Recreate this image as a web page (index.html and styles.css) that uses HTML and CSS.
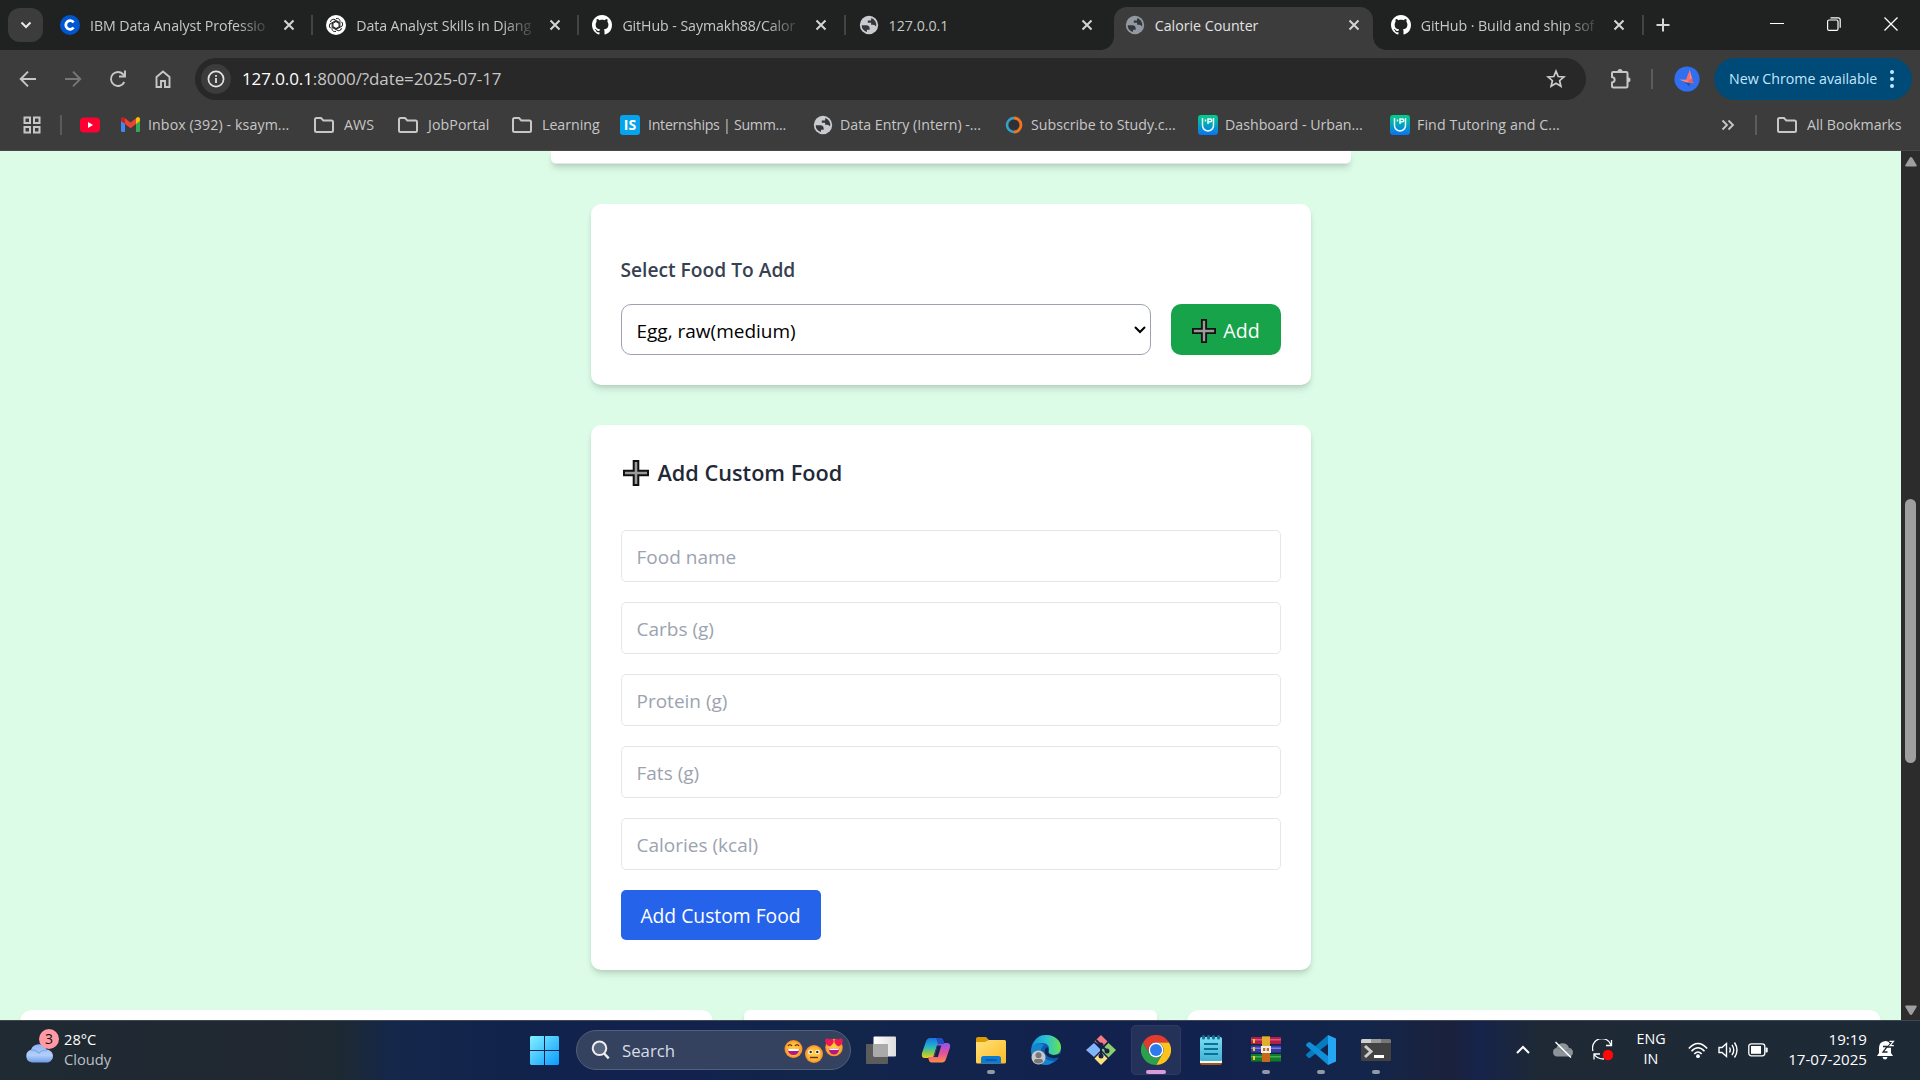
FILE: index.html
```html
<!DOCTYPE html>
<html lang="en">
<head>
<meta charset="utf-8">
<title>Calorie Counter</title>
<link rel="stylesheet" href="styles.css">
</head>
<body>
<svg class="sprite" aria-hidden="true">
  <symbol id="close" viewBox="0 0 12 12"><path d="M1.500 1.500l9 9M10.500 1.500l-9 9" fill="none" stroke="currentColor" stroke-width="2"/></symbol>
  <symbol id="folder" viewBox="0 0 22 18"><path d="M2 3.500Q2 2 3.500 2H8l2.300 2.400h8.200Q20 4.400 20 5.900V14.500Q20 16 18.500 16H3.500Q2 16 2 14.500Z" fill="none" stroke="currentColor" stroke-width="2"/></symbol>
  <symbol id="globe" viewBox="0 0 24 24"><circle cx="12" cy="12" r="10" fill="currentColor"/><path d="M4 12.200h5q3.500.3 3.700 3.200v1.800H9.800v2.400A8 8 0 0 1 4 12.200ZM14.500 4.400A8 8 0 0 1 19.800 13.500q-1.300-1.800-3.300-1.800h-2.200V9.600h-3.600V7.200h3.500Z" fill="#35373a"/></symbol>
  <symbol id="github" viewBox="0 0 16 16"><path fill="#fff" d="M8 0C3.580 0 0 3.580 0 8c0 3.540 2.290 6.530 5.470 7.590.4.070.55-.17.55-.38 0-.19-.01-.82-.01-1.490-2.010.37-2.530-.49-2.690-.94-.09-.23-.48-.94-.82-1.130-.28-.15-.68-.52-.01-.53.63-.01 1.080.58 1.230.82.72 1.210 1.870.87 2.330.66.07-.52.28-.87.51-1.070-1.780-.2-3.640-.89-3.640-3.950 0-.87.31-1.590.82-2.150-.08-.2-.36-1.020.08-2.120 0 0 .67-.21 2.200.82.64-.18 1.320-.27 2-.27s1.360.09 2 .27c1.530-1.040 2.200-.82 2.200-.82.44 1.100.16 1.920.08 2.120.51.56.82 1.270.82 2.150 0 3.070-1.870 3.750-3.650 3.950.29.25.54.73.54 1.480 0 1.070-.01 1.930-.01 2.200 0 .21.15.46.55.38A8.010 8.010 0 0 0 16 8c0-4.420-3.580-8-8-8z"/></symbol>
  <symbol id="plus" viewBox="0 0 26 26"><path d="M10.700 1h4.600v9.700H25v4.600h-9.700V25h-4.600v-9.700H1v-4.600h9.700Z" fill="#9b9b9b" stroke="#111" stroke-width="2"/></symbol>
  <linearGradient id="upg" x2="0" y2="1"><stop stop-color="#05cf86"/><stop offset="1" stop-color="#0873f4"/></linearGradient>
  <symbol id="upi" viewBox="0 0 20 20"><rect width="20" height="20" rx="3" fill="url(#upg)"/><path d="M4.500 3v7.500a5.500 5.500 0 0 0 11 0V3M10 9V4h2.300q1.400 0 1.400 1.400t-1.400 1.400H10M7.500 4.500v2" fill="none" stroke="#e7fcff" stroke-width="1.500"/></symbol>
</svg>

<header class="chrome">
  <div class="tabstrip">
    <button class="tab-search"><svg width="12" height="8" viewBox="0 0 12 8"><path d="M1.500 1.500L6 6l4.500-4.500" fill="none" stroke="#e8e8e8" stroke-width="2"/></svg></button>
    <div class="tab"><svg class="fav" viewBox="0 0 20 20"><circle cx="10" cy="10" r="10" fill="#0056d2"/><path d="M13.600 12.500A4.300 4.300 0 1 1 13.600 7.500" fill="none" stroke="#fff" stroke-width="2.800"/></svg><span class="title fade">IBM Data Analyst Professio</span><svg class="x"><use href="#close"/></svg></div>
    <div class="tab"><svg class="fav" viewBox="0 0 20 20"><circle cx="10" cy="10" r="10" fill="#fff"/><g fill="none" stroke="#222" stroke-width="1"><g id="petal"><path d="M10 3.600c2.600-.8 4.500 1.200 3.900 3.700v4L10 13.500"/></g><use href="#petal" transform="rotate(60 10 10)"/><use href="#petal" transform="rotate(120 10 10)"/><use href="#petal" transform="rotate(180 10 10)"/><use href="#petal" transform="rotate(240 10 10)"/><use href="#petal" transform="rotate(300 10 10)"/></g></svg><span class="title fade">Data Analyst Skills in Djang</span><svg class="x"><use href="#close"/></svg></div>
    <div class="tab"><svg class="fav"><use href="#github"/></svg><span class="title fade">GitHub - Saymakh88/Calor</span><svg class="x"><use href="#close"/></svg></div>
    <div class="tab nosep"><svg class="fav globe"><use href="#globe"/></svg><span class="title">127.0.0.1</span><svg class="x"><use href="#close"/></svg></div>
    <div class="tab active"><svg class="fav globe dim"><use href="#globe"/></svg><span class="title">Calorie Counter</span><svg class="x"><use href="#close"/></svg></div>
    <div class="tab"><svg class="fav"><use href="#github"/></svg><span class="title fade">GitHub · Build and ship sof</span><svg class="x"><use href="#close"/></svg></div>
    <button class="newtab"><svg width="14" height="14"><path d="M7 .5v13M.5 7h13" stroke="#d5d5d5" stroke-width="2"/></svg></button>
    <div class="window-buttons">
      <svg width="14" height="14"><path d="M0 6.500h14" stroke="#fff"/></svg>
      <svg width="14" height="14"><g fill="none" stroke="#fff" stroke-width="1.200"><rect x=".6" y="3" width="10.400" height="10.400" rx="1.500"/><path d="M3.500.8h7.700q2 0 2 2v8"/></g></svg>
      <svg width="14" height="14"><path d="M.5.5l13 13M13.500.5l-13 13" stroke="#fff" stroke-width="1.300"/></svg>
    </div>
  </div>

  <div class="toolbar">
    <nav class="nav">
      <svg viewBox="0 0 20 20"><path d="M18 10H3M10 2.700L2.700 10l7.300 7.300" /></svg>
      <svg class="off" viewBox="0 0 20 20"><path d="M2 10h15M10 2.700l7.300 7.300-7.300 7.300"/></svg>
      <svg viewBox="0 0 20 20"><path d="M16.300 13A7 7 0 1 1 15.500 5.700L17 7.200M17 1.500v6h-6"/></svg>
      <svg viewBox="0 0 20 20"><path d="M3.500 8L10 2.500 16.500 8v10H12v-6H8v6H3.500Z"/></svg>
    </nav>
    <div class="omnibox">
      <span class="info"><svg width="18" height="18"><circle cx="9" cy="9" r="7.600" fill="none" stroke="#e3e3e3" stroke-width="1.700"/><path d="M9 8v5M9 5v1.800" stroke="#e3e3e3" stroke-width="1.800"/></svg></span>
      <span class="url"><b>127.0.0.1</b>:8000/?date=2025-07-17</span>
      <svg class="star" width="20" height="20" viewBox="0 0 20 20"><path d="M10 2.200l2.200 5.300 5.700.5-4.300 3.700 1.300 5.600-4.900-3-4.900 3 1.300-5.600L2.100 8l5.700-.5Z" fill="none" stroke="#ccc" stroke-width="1.700"/></svg>
    </div>
    <svg class="puzzle" width="24" height="24" viewBox="0 0 24 24"><path d="M4 5h13.200q1.300 0 1.300 1.300v12.700q0 1.500-1.500 1.500H4.500Q3 20.500 3 19V15.500c3.500-.5 3.500-5 0-5.500V6Q3 5 4 5Z" fill="none" stroke="#c7c7c7" stroke-width="2"/><path d="M8.500 4.500a2.500 2.500 0 0 1 5 0ZM19 10.200a2.500 2.500 0 0 1 0 5Z" fill="#c7c7c7"/></svg>
    <i class="bar"></i>
    <svg class="avatar" width="26" height="26" viewBox="0 0 26 26"><circle cx="13" cy="13" r="12.600" fill="#2f6ff0"/><path d="M10 15.500l6-1-.5 6Z" fill="#1650b8"/><path d="M15.800 4l2.700 10-5.500-1Z" fill="#ff8b7d"/><path d="M5 13.500l8 .2 6.500 3.300-7-.5Z" fill="#ff8277"/><path d="M15.800 4l-3.800 9.500 4 3.500Z" fill="#f1716c"/><path d="M17.500 12l2.500 5.500-6-1.200Z" fill="#e85c5c"/></svg>
    <button class="update"><span>New Chrome available</span><svg width="4" height="20"><circle cx="2" cy="3" r="2"/><circle cx="2" cy="10" r="2"/><circle cx="2" cy="17" r="2"/></svg></button>
  </div>

  <div class="bookmarks">
    <svg width="18" height="18"><g fill="none" stroke="#c7c7c7" stroke-width="2"><path d="M1.500 1.500H7V7H1.500ZM11 1.500h5.500V7H11ZM1.500 11H7v5.500H1.500ZM11 11h5.500v5.500H11Z"/></g></svg>
    <i class="bar"></i>
    <div class="bm"><svg width="20" height="16"><rect y=".5" width="20" height="15" rx="4" fill="#ff0033"/><path d="M8 5l5 3-5 3Z" fill="#fff"/></svg></div>
    <div class="bm"><svg width="19" height="15" viewBox="0 0 19 15"><path d="M0 2v11.500Q0 15 1.300 15H4V5Z" fill="#4285f4"/><path d="M19 2v11.500q0 1.500-1.300 1.500H15V5Z" fill="#34a853"/><path d="M4 1.200L9.500 5.500 15 1.200V7L9.500 11.300 4 7Z" fill="#ea4335"/><path d="M0 2.200C0 .2 2-.5 3.500.7L4 1.200V7L0 4Z" fill="#c5221f"/><path d="M19 2.200C19 .2 17-.5 15.500.7l-.5.500V7l4-3Z" fill="#fbbc04"/></svg><span class="loose">Inbox (392) - ksaym...</span></div>
    <div class="bm"><svg class="folder"><use href="#folder"/></svg><span class="loose">AWS</span></div>
    <div class="bm"><svg class="folder"><use href="#folder"/></svg><span class="loose">JobPortal</span></div>
    <div class="bm"><svg class="folder"><use href="#folder"/></svg><span>Learning</span></div>
    <div class="bm"><b class="is">IS</b><span class="tight">Internships | Summ...</span></div>
    <div class="bm near"><svg class="fav globe"><use href="#globe"/></svg><span>Data Entry (Intern) -...</span></div>
    <div class="bm"><svg width="18" height="18"><circle cx="9" cy="9" r="5" fill="#2c3039"/><path d="M9 2a7 7 0 0 0 0 14" fill="none" stroke="#35a3c4" stroke-width="2.500"/><path d="M9 2a7 7 0 0 1 0 14" fill="none" stroke="#f47321" stroke-width="2.800"/></svg><span>Subscribe to Study.c...</span></div>
    <div class="bm near"><svg class="fav"><use href="#upi"/></svg><span>Dashboard - Urban...</span></div>
    <div class="bm near"><svg class="fav"><use href="#upi"/></svg><span class="loose">Find Tutoring and C...</span></div>
    <svg width="14" height="12"><path d="M1.500 1.500L6 6l-4.500 4.500M7.500 1.500L12 6l-4.500 4.500" fill="none" stroke="#c7c7c7" stroke-width="1.800"/></svg>
    <i class="bar"></i>
    <div class="bm"><svg class="folder"><use href="#folder"/></svg><span>All Bookmarks</span></div>
  </div>
</header>

<div class="viewport">
  <main class="page">
    <section class="card above"></section>

    <section class="card picker">
      <label class="label" for="food">Select Food To Add</label>
      <div class="row">
        <div class="select" id="food"><span>Egg, raw(medium)</span><svg width="12" height="8"><path d="M1 1l5 5 5-5" fill="none" stroke="#000" stroke-width="2"/></svg></div>
        <button class="add"><svg width="24" height="24"><use href="#plus"/></svg><span>Add</span></button>
      </div>
    </section>

    <section class="card custom">
      <h2><svg width="26" height="26"><use href="#plus"/></svg><span>Add Custom Food</span></h2>
      <form>
        <input type="text" placeholder="Food name">
        <input type="text" placeholder="Carbs (g)">
        <input type="text" placeholder="Protein (g)">
        <input type="text" placeholder="Fats (g)">
        <input type="text" placeholder="Calories (kcal)">
        <button class="submit" type="button">Add Custom Food</button>
      </form>
    </section>

    <div class="below"><section class="card"></section><section class="card mid"></section><section class="card"></section></div>
  </main>
  <div class="scrollbar">
    <svg width="12" height="10"><path d="M6 0q.8 0 1.400 1l4.200 7q.6 1.500-.8 1.500H1.200Q-.2 9.500.4 8l4.200-7Q5.200 0 6 0Z" fill="#9f9f9f"/></svg>
    <div class="track"><div class="thumb"></div></div>
    <svg width="12" height="10"><path d="M6 10q.8 0 1.400-1l4.200-7Q12.200.5 10.800.5H1.200Q-.2.5.4 2l4.200 7Q5.200 10 6 10Z" fill="#9f9f9f"/></svg>
  </div>
</div>

<footer class="taskbar">
  <div class="weather">
    <div class="cloud"><svg width="30" height="20" viewBox="0 0 30 20"><linearGradient id="cl" x2="0" y2="1"><stop stop-color="#8fb4f5"/><stop offset=".6" stop-color="#b3cff9"/><stop offset="1" stop-color="#6d9ae9"/></linearGradient><path d="M7 19.500a6.500 6.500 0 0 1-1-12.700A8.300 8.300 0 0 1 21.500 6.500 6.600 6.600 0 0 1 23 19.500Z" fill="url(#cl)"/><path d="M6 7q4-.5 8 3 3-3 8-3" fill="none" stroke="#7ba5ee" stroke-width="1.200"/></svg><span class="badge">3</span></div>
    <div class="forecast"><span>28°C</span><span class="muted">Cloudy</span></div>
  </div>

  <div class="center">
    <svg class="start" width="29" height="29"><linearGradient id="wg" gradientUnits="userSpaceOnUse" x1="0" y1="0" x2="29" y2="29"><stop stop-color="#84f0ff"/><stop offset="1" stop-color="#089bff"/></linearGradient><path d="M1 0h13v14H0V1ZM15 0h13l1 1v13H15ZM0 15h14v14H1l-1-1ZM15 15h14v13l-1 1H15Z" fill="url(#wg)"/></svg>
    <div class="search">
      <svg width="20" height="20"><circle cx="8.500" cy="8.300" r="6.800" fill="#586580" stroke="#eee" stroke-width="2"/><path d="M13.200 13.500l4.500 4.800" stroke="#eee" stroke-width="2.500"/></svg>
      <span>Search</span>
      <svg class="emoji" width="60" height="26" viewBox="0 0 60 26">
        <radialGradient id="eg"><stop stop-color="#ffcf3f"/><stop offset=".7" stop-color="#ffb638"/><stop offset="1" stop-color="#f4882a"/></radialGradient>
        <g fill="url(#eg)"><circle cx="9.500" cy="11" r="9"/><circle cx="30" cy="16" r="9"/><circle cx="50" cy="9.500" r="8.800"/></g>
        <path d="M3.500 11h12q-1 6-6 6t-6-6Z" fill="#b51683"/><path d="M4 11h11l-.5 2h-10Z" fill="#fff"/><path d="M4 8q2-2.500 4 0M11 8q2-2.500 4 0" fill="none" stroke="#4c2712" stroke-width="1.200"/>
        <circle cx="26.500" cy="14" r="2.300" fill="#fff"/><circle cx="33.500" cy="14" r="2.300" fill="#fff"/><circle cx="26.700" cy="14" r="1.200" fill="#412312"/><circle cx="33.300" cy="14" r="1.200" fill="#412312"/><path d="M26 19.500h8" stroke="#633415" stroke-width="1.400"/>
        <path d="M44.500 10.500h11q-1 6-5.500 6t-5.500-6Z" fill="#b51683"/><path d="M45 10.500h10l-.5 1.500h-9Z" fill="#fff"/><path id="hrt" d="M45.500 8.500C39 5 41 0 43.500.2q1.700.2 2.200 2Q47-.1 48.800 1.200C51 3.500 48.500 7.500 45.500 8.500Z" fill="#ee1853"/><use href="#hrt" transform="matrix(-1 0 0 1 100 0)"/>
      </svg>
    </div>
    <div class="app"><svg viewBox="0 0 30 30"><linearGradient id="tv"><stop stop-color="#fff"/><stop offset="1" stop-color="#ddd"/></linearGradient><rect y="9" width="22" height="20" rx="1" fill="#5c5c5c"/><rect x="7.500" y="1.500" width="22.500" height="20" rx="1" fill="url(#tv)"/><path d="M7.500 9H22v12.500H7.500Z" fill="#aaa"/></svg></div>
    <div class="app"><svg viewBox="0 0 30 30"><defs><linearGradient id="c1" x2="0" y2="1"><stop stop-color="#1474e8"/><stop offset=".45" stop-color="#27b6c6"/><stop offset=".7" stop-color="#79c65b"/><stop offset="1" stop-color="#f7c915"/></linearGradient><linearGradient id="c2" x2="0" y2="1"><stop stop-color="#8b55ef"/><stop offset=".5" stop-color="#e24f9e"/><stop offset="1" stop-color="#ff8c46"/></linearGradient></defs><path d="M19.500 3q2 0 2.700 2.500l1 3.500h-5q-2 0-2.700 2.500l-2.800 9Q12 23 9.500 23H3.500Q0 23 1 18L5 6.500Q6 3 9 3Z" fill="url(#c1)"/><path d="M10.500 27.500q-2 0-2.700-2.500L7 22h4q2 0 2.700-2.500l2.800-9Q17.200 8 19.500 8h6.500q4 0 3 4.500L25 24q-1 3.500-4 3.500Z" fill="url(#c2)"/><path d="M15 3h4.500q2 0 2.700 2.500l1 3.500H17Z" fill="#244dc7"/><path d="M16.500 10.500h3.800l-3.400 11.500h-4q.6-.8 1-2.200Z" fill="#13224c"/></svg></div>
    <div class="app run"><svg viewBox="0 0 30 30"><linearGradient id="fe" x2="1" y2="1"><stop stop-color="#ffe17b"/><stop offset="1" stop-color="#ffba22"/></linearGradient><path d="M0 4Q0 2 2 2h8l3 3v5H0Z" fill="#dd9a05"/><path d="M0 7h9l4-2h15.500Q30 5 30 6.500V27q0 1.500-1.500 1.500h-27Q0 28.500 0 27Z" fill="url(#fe)"/><path d="M5 28.500v-5q0-2.500 2.500-2.500h15q2.500 0 2.500 2.500v5Z" fill="#0c7bd3"/><path d="M9.500 25h11" stroke="#0757a5" stroke-width="1.600"/></svg></div>
    <div class="app"><svg viewBox="0 0 30 30"><defs><linearGradient id="e1"><stop stop-color="#1397d5"/><stop offset=".5" stop-color="#2bc2d3"/><stop offset="1" stop-color="#69e34b"/></linearGradient></defs><path d="M0 15a15 15 0 1 1 23 12.500Q10 30 6 24Z" fill="#0b5db3"/><path d="M1 11C4 3 9 0 15 0c9 0 15 6 15 12 0 5-3 8-7.500 8-4 0-6.500-1.500-5-4 1.800-5-1.500-8-6.500-8C6 8 2 10 1 13Z" fill="url(#e1)"/><path d="M0 16C0 9 8 6 13 10q-4 3-2.500 8Q13 26 23 26q-3 4-8 4C7 30 0 24 0 16Z" fill="#1684cf"/><path d="M16 12q-3 2-2 6 3 7 14 4.500l2-1.500v-3q-3 2.500-7.500 2-5.500-.5-5-4 1-2-1.500-4Z" fill="#10254c"/><circle cx="7.500" cy="22.500" r="7" fill="#c9c9c9"/><circle cx="7.500" cy="20.300" r="3" fill="#777"/><path d="M3 27q0-3 2-3h5q2 0 2 3-4.500 3-9 0Z" fill="#777"/></svg></div>
    <div class="app"><svg viewBox="0 0 30 30"><path d="M15 0l6.500 6.500-5 5L8.500 6.500Z" fill="#f47b80"/><path d="M8 8l6 6v2l-6 6-8-7Z" fill="#80b5fa"/><path d="M22.500 8L30 15l-7.500 7.500L15.500 15Z" fill="#8dcf6a"/><path d="M15 17l6.500 6.500L15 30l-6.500-6.500Z" fill="#fbe27a"/><path d="M10 5l5 5v12M15 10l6.500 6.500" fill="none" stroke="#13214c" stroke-width="2"/><g fill="#13214c"><circle cx="15" cy="10" r="2.500"/><circle cx="15" cy="21" r="2.500"/><circle cx="21" cy="16" r="2.500"/></g></svg></div>
    <div class="app run current"><svg viewBox="0 0 30 30"><path d="M2 7.500A15 15 0 0 1 28 7.500H15A7.500 7.500 0 0 0 8.500 18.800Z" fill="#e33b2e"/><path d="M28 7.500A15 15 0 0 1 15 30L21.500 18.800A7.500 7.500 0 0 0 15 7.500Z" fill="#fcc31e"/><path d="M2 7.500L8.500 18.800a7.500 7.500 0 0 0 13 0L15 30A15 15 0 0 1 2 7.500Z" fill="#2da04d"/><circle cx="15" cy="15" r="7.400" fill="#fff"/><circle cx="15" cy="15" r="6" fill="#2b7bef"/></svg></div>
    <div class="app"><svg viewBox="0 0 30 30"><linearGradient id="np" x2="0" y2="1"><stop stop-color="#7bdcf2"/><stop offset="1" stop-color="#42b2d3"/></linearGradient><path d="M4 26h22v2q0 2-2 2H6q-2 0-2-2Z" fill="#a4561a"/><path d="M4 24h22v4H4Z" fill="#f4f4f4"/><rect x="4" y="2" width="22" height="24" rx="1.500" fill="url(#np)"/><path d="M8 9h14M8 14h14M8 19h14" stroke="#087299" stroke-width="2"/><path d="M7.500 1.500v1.500M12.500 1.500v1.500M17.500 1.500v1.500M22.500 1.500v1.500" stroke="#127591" stroke-width="3" stroke-linecap="round"/></svg></div>
    <div class="app run"><svg viewBox="0 0 30 30"><path d="M0 2h30v7H0Z" fill="#b31f48"/><path d="M0 4h30v1.500H0Z" fill="#e35578"/><path d="M0 10.500h30v7H0Z" fill="#3b3ba4"/><path d="M0 12.500h30V14H0Z" fill="#7b7be4"/><path d="M0 19h30v7.500H0Z" fill="#127a2b"/><path d="M0 21h30v1.500H0Z" fill="#45ad4c"/><path d="M3 4v4M3 12v4M3 21v4" stroke="#f0cd20" stroke-width="2"/><path d="M11 1.500h8V27h-8Z" fill="#c66817"/><path d="M11 1.500h8v10h-8Z" fill="#ddb12b"/><path d="M11 12h8v5h-8Z" fill="none" stroke="#eee" stroke-width="2"/><path d="M15 12v5" stroke="#eee" stroke-width="1.500"/></svg></div>
    <div class="app run"><svg viewBox="0 0 30 30"><path d="M22 0l8 3.500v23L22 30Z" fill="#24a6f2"/><path d="M22 0v9L4.500 22.500Q3 23.500 2 22.500L.5 21q-1-1 0-2Z" fill="#087abf"/><path d="M22 30v-9L4.500 7.500Q3 6.500 2 7.500L.5 9q-1 1 0 2Z" fill="#108fd8"/></svg></div>
    <div class="app run"><svg viewBox="0 0 30 30"><rect y="4" width="30" height="22" rx="1.500" fill="#424242"/><path d="M0 8V5.500Q0 4 1.500 4H10v4Z" fill="#cfcfcf"/><path d="M10 4h10v4H10Z" fill="#9b9b9b"/><path d="M20 4h8.500Q30 4 30 5.500V8H20Z" fill="#767676"/><path d="M4 11l6 5.500L4 22" fill="none" stroke="#ccc" stroke-width="3"/><path d="M13 21.500h10" stroke="#fff" stroke-width="3"/></svg></div>
  </div>

  <div class="tray">
    <svg width="16" height="10"><path d="M2 8l6-6 6 6" fill="none" stroke="#fff" stroke-width="2"/></svg>
    <svg width="22" height="18" viewBox="0 0 22 18"><path d="M5 15.500a4.300 4.300 0 0 1-.5-8.500A6.500 6.500 0 0 1 17 7a4.300 4.300 0 0 1 .5 8.500Z" fill="#8d939a"/><path d="M4.500 7q4 0 6.500 4 3-3 8-3" stroke="#777e86" fill="none"/><path d="M3.500 1l15.500 15.500" stroke="#fff" stroke-width="1.500"/></svg>
    <svg width="22" height="22" viewBox="0 0 22 22"><g fill="none" stroke="#fff" stroke-width="1.300"><path d="M1 12A9 9 0 0 1 19 6M19.500 1v5.500H14M12 20Q5 20 2 15M2 20.500V15h6"/></g><circle cx="16" cy="16" r="5.200" fill="#ff0808"/></svg>
    <div class="lang"><span>ENG</span><span>IN</span></div>
    <svg width="20" height="17" viewBox="0 0 20 17"><g fill="none" stroke="#fff" stroke-width="1.600"><path d="M.8 6.500Q10-3.500 19.200 6.500M3.500 9.300q6.500-7 13 0M6.300 12q3.700-4 7.400 0"/></g><circle cx="10" cy="14.200" r="1.900" fill="#fff"/></svg>
    <svg width="20" height="18" viewBox="0 0 20 18"><g fill="none" stroke="#fff" stroke-width="1.400"><path d="M1 6.500h3L8.500 2.500v13L4 11.500H1ZM11.500 6.500q1.500 2.500 0 5M14 3.800q3.500 5.200 0 10.400M16.500 1.500q5 7.500 0 15"/></g></svg>
    <svg width="20" height="14" viewBox="0 0 20 14"><rect x=".8" y=".8" width="16" height="12" rx="2.500" fill="none" stroke="#fff" stroke-width="1.300"/><path d="M3 3h10v7.800H3Z" fill="#fff"/><path d="M17.500 4.500h1.200q1 0 1 1v3q0 1-1 1h-1.200Z" fill="#fff"/></svg>
    <div class="clock"><span>19:19</span><span>17-07-2025</span></div>
    <svg width="18" height="20" viewBox="0 0 18 20"><path d="M2 13V8Q2 1.500 8.500 1q5 .5 5.500 5v7l2 3H0ZM5.500 17h5q-.5 2.500-2.500 2.500T5.500 17Z" fill="#fff"/><path d="M6 6.500h4.300L6 12h4.500" fill="none" stroke="#1e2935" stroke-width="1.300"/><path d="M12 1.300h4.500L13 6h3.500" fill="none" stroke="#1e2935" stroke-width="3.500"/><path d="M12.500 1.300h4L13 5.700h3.800" fill="none" stroke="#fff" stroke-width="1.200"/></svg>
  </div>
</footer>
</body>
</html>
```
FILE: styles.css
```css
* { box-sizing: border-box; }
body {
  margin: 0;
  width: 1920px;
  height: 1080px;
  overflow: hidden;
  display: flex;
  flex-direction: column;
  font-family: "Open Sans", "Noto Sans", sans-serif;
  font-size: 14.200px;
  color: #c7c7c7;
}
button, input { font: inherit; border: 0; padding: 0; margin: 0; }
svg { flex: none; display: block; }
span { white-space: nowrap; }
.sprite { position: absolute; width: 0; height: 0; }

/* Browser frame */
.chrome { height: 151px; background: #3c3c3c; border-bottom: 1px solid #4b4749; flex: none; }
.tabstrip { height: 50px; background: #202221; display: flex; align-items: flex-start; padding-left: 8px; }
.tab-search { width: 35px; height: 34px; margin: 8px 6px 0 0; border-radius: 12px; background: #3c3c3c; display: flex; align-items: center; justify-content: center; }
.tab { position: relative; width: 266.200px; height: 43px; margin-top: 7px; padding: 0 20.500px 7px 11px; display: flex; align-items: center; }
.tab::after { content: ""; position: absolute; right: 2px; top: 8px; width: 2px; height: 20px; background: #444; }
.nosep::after { display: none; }
.fav { width: 20px; height: 20px; }
.globe { color: #c9cbcf; width: 22px; height: 22px; margin: 0 -1px; }
.globe.dim { color: #9299a3; }
.title { min-width: 0; margin-left: 10px; }
.fade { letter-spacing: -.08px; -webkit-mask-image: linear-gradient(90deg, #000 84%, rgba(0,0,0,.2) 100%); mask-image: linear-gradient(90deg, #000 84%, rgba(0,0,0,.2) 100%); }
.x { width: 12px; height: 12px; margin-left: auto; color: #d5d5d5; }
.active { width: 259px; margin-right: 7px; background: #3c3c3c; border-radius: 13px 13px 0 0; color: #e3e3e3; padding-right: 13px; }
.active::before, .active::after { content: ""; position: absolute; top: auto; bottom: 0; width: 13px; height: 13px; }
.active::before { left: -13px; background: radial-gradient(circle at 0 0, transparent 12.500px, #3c3c3c 13px); }
.active::after { right: -13px; background: radial-gradient(circle at 100% 0, transparent 12.500px, #3c3c3c 13px); }
.newtab { background: none; width: 14px; height: 14px; margin: 18px 0 0 10px; }
.window-buttons { display: flex; gap: 43px; margin: 17px 22px 0 auto; }

.toolbar { height: 57px; display: flex; align-items: center; padding: 0 8px 0 17.500px; }
.nav { display: flex; gap: 25px; width: 177.500px; }
.nav svg { width: 20px; height: 20px; fill: none; stroke: #c7c7c7; stroke-width: 1.900; }
.nav .off { stroke: #777; }
.omnibox { width: 1391px; height: 42px; border-radius: 21px; background: #282828; display: flex; align-items: center; padding: 0 20px 0 6px; }
.info { width: 30px; height: 30px; border-radius: 50%; background: #3c3c3c; display: flex; align-items: center; justify-content: center; }
.url { margin-left: 11px; font-size: 17px; letter-spacing: -.1px; }
.url b { font-weight: 400; color: #fff; }
.star { margin-left: auto; }
.puzzle { margin-left: 23px; }
.bar { width: 2px; height: 20px; background: #5b5b5b; flex: none; }
.toolbar .bar { margin-left: 18px; }
.avatar { margin-left: 20.500px; }
.update { margin-left: auto; width: 198px; height: 42px; border-radius: 21px; background: #004a77; color: #c2e7ff; display: flex; align-items: center; justify-content: space-between; padding: 0 18px 0 15px; }
.update svg { fill: #c2e7ff; }

.bookmarks { height: 35px; display: grid; align-items: center; padding-left: 23px; grid-template-columns: 37px 20px 41px 193px 84px 114px 108px 193px 192px 193px 192px 331px 34px 22px auto; }
.bm { display: flex; align-items: center; gap: 8px; }
.near { gap: 7px; }
.bm .folder { width: 22px; height: 18px; margin: 0 1px 0 -1px; }
.loose { letter-spacing: .1px; }
.tight { letter-spacing: -.28px; }
.is { width: 20px; height: 20px; border-radius: 3px; background: #05a4ec; color: #fff; font-size: 14px; line-height: 20px; text-align: center; }

/* Page */
.viewport { height: 869px; display: flex; overflow: hidden; }
.page { flex: 1; background: #dcfce7; display: flex; flex-direction: column; align-items: center; font-size: 19px; }
.card { background: #fff; border-radius: 10px; box-shadow: 0 5px 7.500px -1px rgba(0,0,0,.13), 0 2.500px 5px -2.500px rgba(0,0,0,.12); }
.above { width: 800px; height: 13px; border-radius: 0 0 5px 5px; border-bottom: 1px solid #e5e7eb; margin-bottom: 40px; flex: none; }
.picker, .custom { width: 720px; padding: 0 30px; flex: none; }
.picker { height: 181px; padding-top: 51px; margin-bottom: 40px; }
.label { display: block; height: 30px; line-height: 30px; margin-bottom: 19px; font-weight: 600; font-size: 19.200px; color: #374151; }
.row { display: flex; gap: 20px; }
.select { width: 530px; height: 51px; border: 1px solid #9ca3af; border-radius: 10px; padding: 2px 4px 0 15px; display: flex; align-items: center; justify-content: space-between; color: #000; }
.select svg { margin-top: -2px; }
.add { width: 110px; height: 51px; border-radius: 10px; background: #16a34a; color: #fff; display: flex; align-items: center; justify-content: center; gap: 7px; padding: 2px 0 0 1px; font-size: 19.600px; }
.custom { height: 545px; padding-top: 30px; margin-bottom: 40px; }
h2 { margin: 0 0 40px; height: 35px; display: flex; align-items: center; gap: 9px; padding-left: 2px; font-size: 21.700px; font-weight: 600; color: #1f2937; }
form { display: flex; flex-direction: column; gap: 20px; }
input { height: 52px; border: 1px solid #e5e7eb; border-radius: 5px; padding: 2px 15px 0; }
input::placeholder { color: #9ca3af; opacity: 1; }
.submit { width: 200px; height: 50px; border-radius: 5px; background: #2563eb; color: #fff; padding-top: 1px; font-size: 19.300px; }
.below { width: 1861px; display: grid; grid-template-columns: 693px 413px 694px; justify-content: space-between; flex: none; }
.below .card { height: 60px; border-radius: 12px; }
.below .mid { border-radius: 6px; }
.scrollbar { width: 19px; background: #2c2c2c; display: flex; flex-direction: column; align-items: center; padding: 6px 0 5px; }
.track { flex: 1; padding-top: 332px; }
.thumb { width: 11px; height: 264px; border-radius: 6px; background: #9f9f9f; }

/* Taskbar */
.taskbar { height: 60px; flex: none; border-top: 1px solid #404755; padding-bottom: 1px; display: grid; grid-template-columns: 530px 1fr auto; align-items: center; color: #fff; background: linear-gradient(90deg, #1f2a33 0, #212832 280px, #1d2932 340px, #15274a 390px, #11234b 510px, #12214e 650px, #12254a 820px, #12214f 1150px, #13254a 1370px, #1b213b 1450px, #16234a 1480px, #1e2935 1540px, #1d2a36 100%); }
.weather { display: flex; align-items: center; padding-left: 25px; gap: 9px; }
.cloud { position: relative; padding-top: 5px; }
.badge { position: absolute; left: 14px; top: -9px; width: 20px; height: 20px; border-radius: 50%; background: #ff99a4; color: #111; text-align: center; line-height: 20px; font-size: 14px; }
.forecast, .lang, .clock { display: flex; flex-direction: column; line-height: 20px; font-size: 14.700px; padding-bottom: 2px; }
.muted { color: #bbc0c4; }
.center { display: flex; align-items: center; }
.search { width: 275px; height: 40px; margin: 0 5px 0 17px; border-radius: 20px; border: 1px solid #50607a; background: #34425f; display: flex; align-items: center; padding: 0 6px 0 14px; color: #d9dce6; font-size: 16.800px; }
.search span { margin-left: 11px; padding-top: 1px; }
.emoji { margin-left: auto; margin-top: 2px; }
.app { position: relative; width: 50px; height: 50px; margin-right: 5px; padding: 10px; border-radius: 5px; }
.app svg { width: 30px; height: 30px; }
.run::after { content: ""; position: absolute; left: 21px; bottom: 1px; width: 8px; height: 4px; border-radius: 2px; background: #9298a8; }
.current { background: #24325a; box-shadow: inset 0 0 0 1px #2d3b62; }
.current::after { left: 15px; width: 20px; background: #dc9ade; }
.tray { display: flex; align-items: center; padding-right: 25px; }
.tray > svg:nth-child(2) { margin-left: 21px; }
.tray > svg:nth-child(3) { margin-left: 18px; }
.lang { align-items: center; width: 30px; margin: 0 22px; font-size: 14.300px; }
.tray > svg:nth-child(6), .tray > svg:nth-child(7) { margin-left: 10px; }
.clock { align-items: flex-end; width: 99px; font-size: 15.100px; }
.clock + svg { margin-left: 10px; }
```
